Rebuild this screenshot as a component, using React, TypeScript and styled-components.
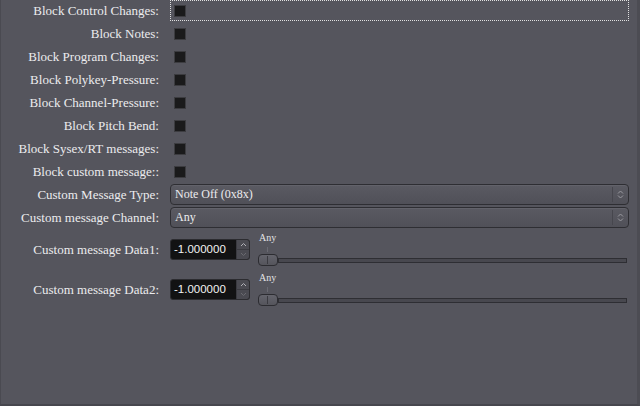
import React from 'react';
import styled, { createGlobalStyle } from 'styled-components';

const GlobalStyle = createGlobalStyle`
  html, body {
    margin: 0;
    padding: 0;
    background: #55555d;
  }
`;

const blockRows = [
  'Block Control Changes:',
  'Block Notes:',
  'Block Program Changes:',
  'Block Polykey-Pressure:',
  'Block Channel-Pressure:',
  'Block Pitch Bend:',
  'Block Sysex/RT messages:',
  'Block custom message::',
];

const UpDown: React.FC<{ color?: string }> = ({ color = '#9a9aa0' }) => (
  <svg width="7" height="9" viewBox="0 0 7 9">
    <path d="M1 3.5 L3.5 1 L6 3.5" fill="none" stroke={color} strokeWidth="1" />
    <path d="M1 5.5 L3.5 8 L6 5.5" fill="none" stroke={color} strokeWidth="1" />
  </svg>
);

const Combo: React.FC<{ value: string }> = ({ value }) => (
  <ComboBox>
    <ComboText>{value}</ComboText>
    <ComboArrow>
      <UpDown />
    </ComboArrow>
  </ComboBox>
);

const DataField: React.FC<{ value: string }> = ({ value }) => (
  <DataCell>
    <SpinBox>
      <SpinText>{value}</SpinText>
      <SpinButtons>
        <SpinBtn>
          <svg width="7" height="5" viewBox="0 0 7 5">
            <path d="M1 4 L3.5 1.5 L6 4" fill="none" stroke="#b0b0b6" strokeWidth="1" />
          </svg>
        </SpinBtn>
        <SpinBtn>
          <svg width="7" height="5" viewBox="0 0 7 5">
            <path d="M1 1 L3.5 3.5 L6 1" fill="none" stroke="#6a6a70" strokeWidth="1" />
          </svg>
        </SpinBtn>
      </SpinButtons>
    </SpinBox>
    <SliderColumn>
      <SliderCaption>Any</SliderCaption>
      <Tick />
      <SliderTrack>
        <SliderHandle />
        <Groove />
      </SliderTrack>
    </SliderColumn>
  </DataCell>
);

const App: React.FC = () => {
  return (
    <Frame>
      <GlobalStyle />
      <Form>
        {blockRows.map((label, i) => (
          <React.Fragment key={label}>
            <Label>{label}</Label>
            <CheckCell focused={i === 0}>
              <CheckBox />
            </CheckCell>
          </React.Fragment>
        ))}

        <Label>Custom Message Type:</Label>
        <Combo value="Note Off (0x8x)" />

        <Label>Custom message Channel:</Label>
        <Combo value="Any" />

        <DataLabel>Custom message Data1:</DataLabel>
        <DataField value="-1.000000" />

        <DataLabel>Custom message Data2:</DataLabel>
        <DataField value="-1.000000" />
      </Form>
    </Frame>
  );
};

const Frame = styled.div`
  width: 640px;
  height: 406px;
  box-sizing: border-box;
  background: #55555d;
  border-left: 1px solid #4a4a51;
  border-right: 3px solid #4c4c53;
  border-bottom: 2px solid #47474e;
  padding-right: 8px;
  font-family: "Liberation Serif", "DejaVu Serif", serif;
  color: #ececee;
  overflow: hidden;
`;

const Form = styled.div`
  display: grid;
  grid-template-columns: 158px 1fr;
  column-gap: 11px;
  row-gap: 2px;
`;

const Label = styled.div`
  font-size: 13px;
  text-align: right;
  height: 21px;
  line-height: 21px;
  white-space: nowrap;
`;

const DataLabel = styled(Label)`
  height: 38px;
  padding-top: 9px;
  box-sizing: border-box;
`;

const CheckCell = styled.div<{ focused: boolean }>`
  height: 21px;
  display: flex;
  align-items: center;
  padding-left: 4px;
  outline: ${(p) => (p.focused ? '1px dotted #e0e0e0' : 'none')};
  outline-offset: -1px;
`;

const CheckBox = styled.div`
  width: 12px;
  height: 12px;
  background: #1a1a1b;
  border: 1px solid #3c3c40;
  box-sizing: border-box;
`;

const ComboBox = styled.div`
  display: flex;
  align-items: center;
  height: 21px;
  box-sizing: border-box;
  border: 1px solid #2e2e33;
  border-radius: 4px;
  background: linear-gradient(#5a5a62, #505058);
  box-shadow: inset 0 1px 0 #62626a;
`;

const ComboText = styled.div`
  flex: 1;
  padding-left: 4px;
  font-size: 12px;
  color: #ececee;
`;

const ComboArrow = styled.div`
  width: 14px;
  height: 15px;
  display: flex;
  align-items: center;
  justify-content: center;
  border-left: 1px solid #46464d;
  margin-right: 1px;
`;

const DataCell = styled.div`
  height: 38px;
  display: flex;
  align-items: flex-start;
  gap: 8px;
`;

const SpinBox = styled.div`
  margin-top: 9px;
  width: 80px;
  height: 21px;
  box-sizing: border-box;
  display: flex;
  background: #121213;
  border: 1px solid #2c2c30;
  border-radius: 3px;
`;

const SpinText = styled.div`
  flex: 1;
  font-family: "Liberation Sans", "DejaVu Sans", sans-serif;
  font-size: 11.5px;
  line-height: 19px;
  padding-left: 3px;
  color: #f2f2f2;
`;

const SpinButtons = styled.div`
  width: 12px;
  display: flex;
  flex-direction: column;
  border-left: 1px solid #3a3a40;
  background: #4a4a51;
  border-radius: 0 2px 2px 0;
`;

const SpinBtn = styled.div`
  flex: 1;
  display: flex;
  align-items: center;
  justify-content: center;
  & + & {
    border-top: 1px solid #3a3a40;
  }
`;

const SliderColumn = styled.div`
  flex: 1;
  display: flex;
  flex-direction: column;
  align-items: flex-start;
  padding-top: 2px;
`;

const SliderCaption = styled.div`
  font-size: 10px;
  line-height: 11px;
  padding-left: 1px;
  color: #e4e4e6;
`;

const Tick = styled.div`
  width: 1px;
  height: 5px;
  margin: 4px 0 0 9px;
  background: #6a6a72;
`;

const SliderTrack = styled.div`
  align-self: stretch;
  display: flex;
  align-items: center;
  margin: 2px 2px 0 0;
  height: 12px;
`;

const SliderHandle = styled.div`
  width: 20px;
  height: 12px;
  box-sizing: border-box;
  border: 1px solid #2c2c31;
  border-radius: 4px;
  background: linear-gradient(#64646c, #55555c);
  position: relative;
  &::after {
    content: '';
    position: absolute;
    left: 8px;
    top: 1px;
    bottom: 1px;
    width: 1px;
    background: #3a3a40;
  }
`;

const Groove = styled.div`
  flex: 1;
  height: 5px;
  box-sizing: border-box;
  background: #48484f;
  border: 1px solid #2e2e33;
`;

export default App;
